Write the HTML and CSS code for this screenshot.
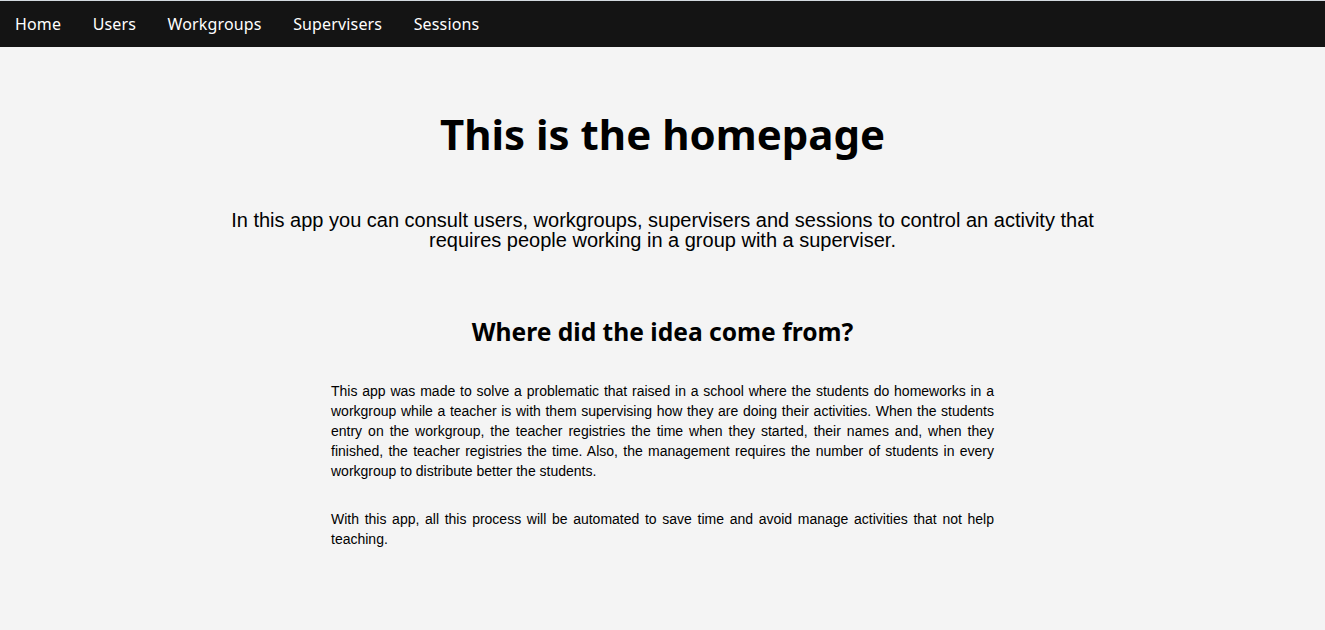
FILE: index.html
```html
<!DOCTYPE html>
<html lang="en">
<head>
<meta charset="utf-8">
<title>Homepage</title>
<link rel="stylesheet" href="styles.css">
</head>
<body>
<nav class="topnav">
  <a class="nav-link" href="#">Home</a>
  <a class="nav-link" href="#">Users</a>
  <a class="nav-link" href="#">Workgroups</a>
  <a class="nav-link" href="#">Supervisers</a>
  <a class="nav-link" href="#">Sessions</a>
</nav>
<main class="content">
  <h1 class="title">This is the homepage</h1>
  <p class="lead">In this app you can consult users, workgroups, supervisers and sessions to control an activity that requires people working in a group with a superviser.</p>
  <h2 class="subtitle">Where did the idea come from?</h2>
  <div class="story">
    <p class="story-text">This app was made to solve a problematic that raised in a school where the students do homeworks in a workgroup while a teacher is with them supervising how they are doing their activities. When the students entry on the workgroup, the teacher registries the time when they started, their names and, when they finished, the teacher registries the time. Also, the management requires the number of students in every workgroup to distribute better the students.</p>
    <p class="story-text second">With this app, all this process will be automated to save time and avoid manage activities that not help teaching.</p>
  </div>
</main>
</body>
</html>
```
FILE: styles.css
```css
html, body {
  margin: 0;
  padding: 0;
}
body {
  background: #f4f4f4;
  border-top: 1px solid #d3d9df;
  color: #000;
  font-family: "Liberation Sans", Arial, sans-serif;
  min-height: 629px;
  box-sizing: border-box;
}
.topnav {
  display: flex;
  background: #141414;
  height: 46px;
  padding-left: 0;
}
.nav-link {
  display: block;
  padding: 0 15.5px 0 15px;
  margin-right: 1px;
  line-height: 46px;
  color: #fff;
  text-decoration: none;
  font-family: "Noto Sans", sans-serif;
  font-size: 16px;
  letter-spacing: 0.15px;
}
.content {
  display: flex;
  flex-direction: column;
  align-items: center;
}
.title {
  margin: 62px 0 0;
  font-family: "Noto Sans", sans-serif;
  font-weight: 700;
  font-size: 42px;
  line-height: 50px;
  text-align: center;
}
.lead {
  margin: 51px 0 0;
  width: 880px;
  font-size: 20px;
  line-height: 20px;
  text-align: center;
}
.subtitle {
  margin: 67px 0 0;
  font-family: "Noto Sans", sans-serif;
  font-weight: 700;
  font-size: 24.6px;
  line-height: 30px;
  text-align: center;
}
.story {
  width: 663px;
  margin-top: 34px;
}
.story-text {
  margin: 0;
  font-size: 14px;
  line-height: 20px;
  text-align: justify;
}
.story-text.second {
  margin-top: 28px;
}
```
